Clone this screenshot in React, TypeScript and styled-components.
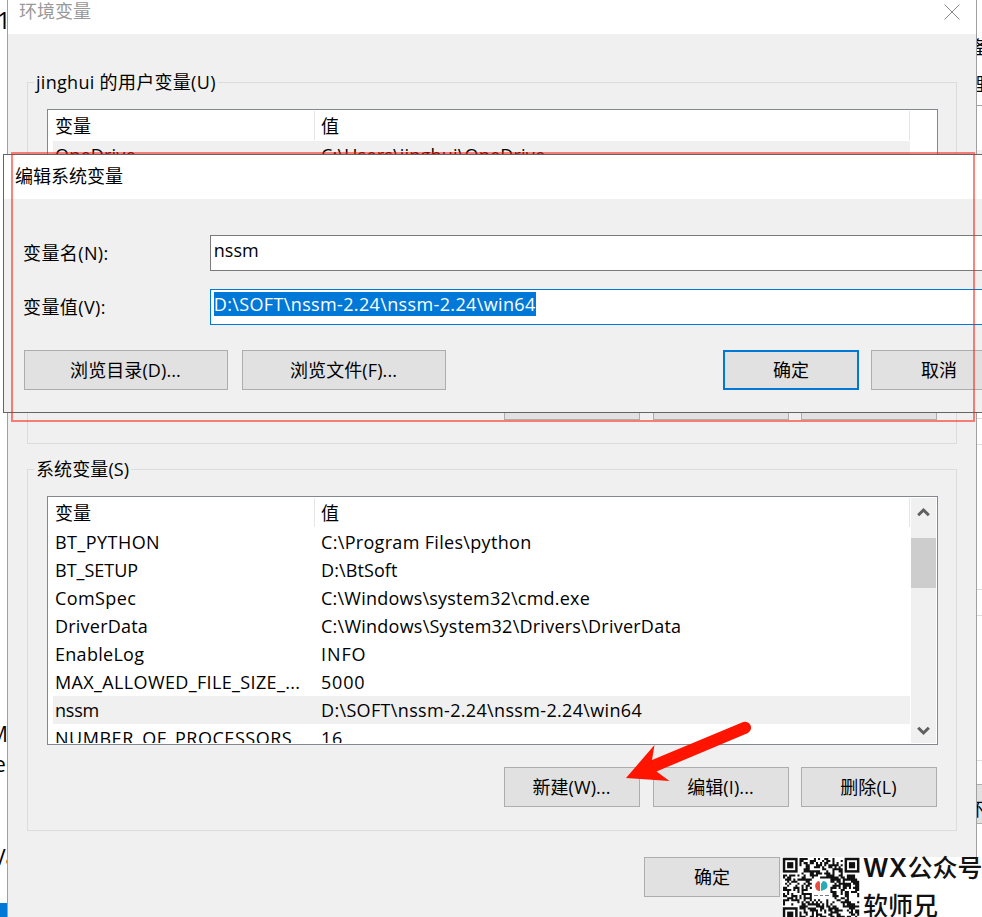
import React from 'react';
import styled, { createGlobalStyle, css } from 'styled-components';

const Global = createGlobalStyle`
  * { box-sizing: border-box; }
  html, body { margin: 0; padding: 0; background: #fff; overflow: hidden; }
`;

const Desktop = styled.main`
  position: relative;
  width: 982px;
  height: 917px;
  overflow: hidden;
  background: #fff;
  color: #000;
  font: 18px/28px 'Open Sans', 'Noto Sans CJK SC', sans-serif;
  white-space: nowrap;
`;

/* Parts of the window behind that stick out on either side */
const Backdrop = styled.div`
  display: flex;
  justify-content: space-between;
  height: 917px;
`;

const Strip = styled.div<{ $w: number }>`
  display: flex;
  flex-direction: column;
  width: ${p => p.$w}px;
  overflow: hidden;
`;

const Cell = styled.div<{ $h: number; $line?: string; $fill?: string }>`
  display: flex;
  flex: none;
  flex-direction: column;
  justify-content: flex-end;
  height: ${p => p.$h}px;
  border-bottom: ${p => (p.$line ? `1px solid ${p.$line}` : '0')};
  background: ${p => p.$fill ?? 'transparent'};
`;

const Scrap = styled.span<{ $shift: number; $size?: number }>`
  text-indent: ${p => p.$shift}px;
  font-size: ${p => p.$size ?? 21}px;
  line-height: 28px;
`;

const VariablesWindow = styled.section`
  position: absolute;
  left: 7px;
  top: -10px;
  display: flex;
  flex-direction: column;
  width: 970px;
  height: 960px;
  border: 1px solid #a0a0a0;
  background: #f0f0f0;
`;

const TitleBar = styled.header`
  display: flex;
  flex: none;
  justify-content: space-between;
  height: 43px;
  padding: 6px 16px 0 11px;
  background: #fff;
  color: #999;
`;

const CloseIcon = styled.svg`
  width: 16px;
  height: 16px;
  margin-top: 7px;
`;

const Groups = styled.div`
  display: flex;
  flex-direction: column;
  gap: 11px;
  padding: 34px 19px 26px;
`;

const Group = styled.fieldset`
  width: 930px;
  height: 376px;
  margin: 0;
  padding: 12px 18px 0 19px;
  border: 1px solid #dcdcdc;
`;

const GroupLabel = styled.legend<{ $track: number }>`
  height: 29px;
  margin-left: -13px;
  padding: 0 2px;
  letter-spacing: ${p => p.$track}px;
`;

const List = styled.div`
  display: flex;
  height: 249px;
  border: 1px solid #828790;
  background: #fff;
  overflow: hidden;
`;

const Table = styled.div`
  flex: none;
  width: 862px;
  height: 246px;
  overflow: hidden;
`;

const HeaderRow = styled.div`
  display: flex;
  height: 31px;
  padding: 1px 0;
`;

const HeaderCell = styled.div<{ $w: number; $inset: number }>`
  width: ${p => p.$w}px;
  padding-left: ${p => p.$inset}px;
  border-right: 1px solid #e5e5e5;
  line-height: 31px;
`;

const Row = styled.div<{ $selected?: boolean }>`
  display: flex;
  height: 28px;
  margin-left: 5px;
  padding-left: 2px;
  line-height: 28px;
  background: ${p => (p.$selected ? '#f0f0f0' : 'transparent')};
`;

const Name = styled.span<{ $track: number }>`
  width: 266px;
  letter-spacing: ${p => p.$track}px;
`;

const Value = styled.span<{ $track: number }>`
  letter-spacing: ${p => p.$track}px;
`;

const ScrollBar = styled.div`
  display: flex;
  flex-direction: column;
  align-items: center;
  width: 25px;
  height: 245px;
  margin: 1px;
  background: #f0f0f0;
`;

const Thumb = styled.div`
  width: 25px;
  height: 50px;
  margin-bottom: auto;
  background: #cdcdcd;
`;

const Chevron = styled.svg<{ $down?: boolean }>`
  width: 13px;
  height: 10px;
  margin: ${p => (p.$down ? '0 0 7px' : '9px 0 21px')};
  transform: ${p => (p.$down ? 'scaleY(-1)' : 'none')};
`;

const Actions = styled.div`
  display: flex;
  justify-content: flex-end;
  gap: 12px;
  padding: 22px 1px 0 0;
`;

const Button = styled.button<{ $w?: number; $primary?: boolean }>`
  flex: none;
  width: ${p => p.$w ?? 136}px;
  height: 40px;
  padding: 0;
  border: 1px solid #adadad;
  background: #e1e1e1;
  color: #000;
  font: inherit;
  ${p => p.$primary && css`border: 2px solid #0078d7;`}
`;

const ButtonText = styled.span`
  margin-left: -1px;
  letter-spacing: 0.1px;
`;

const FirstButton = styled(Button)`
  margin-right: 1px;
`;

const Footer = styled.footer`
  padding-left: 636px;
`;

const EditWindow = styled.section`
  position: absolute;
  left: 3px;
  top: 154px;
  width: 1025px;
  height: 259px;
  border: 1px solid #646464;
  background: #f0f0f0;
`;

const EditTitle = styled.header`
  height: 44px;
  padding: 7px 0 0 11px;
  background: #fff;
`;

const EditBody = styled.div`
  display: flex;
  flex-direction: column;
  gap: 18px;
  padding: 36px 20px 0 19px;
`;

const Field = styled.label`
  display: flex;
  height: 36px;
`;

const FieldName = styled.span`
  width: 187px;
  line-height: 36px;
  letter-spacing: 0.4px;
`;

const FieldBox = styled.div<{ $focus?: boolean }>`
  width: 798px;
  padding: 2px 3px;
  border: 1px solid ${p => (p.$focus ? '#0078d7' : '#7a7a7a')};
  background: #fff;
  line-height: 24px;
`;

const Selected = styled.span`
  display: inline-block;
  height: 24px;
  background: #0078d7;
  color: #fff;
  letter-spacing: 0.36px;
`;

const EditActions = styled.div`
  display: flex;
  justify-content: space-between;
  width: 984px;
  padding: 7px 0 0 1px;
`;

const ButtonPair = styled.div<{ $gap: number }>`
  display: flex;
  gap: ${p => p.$gap}px;
`;

const Highlight = styled.div`
  position: absolute;
  left: 11px;
  top: 152px;
  width: 964px;
  height: 270px;
  border: 2px solid rgba(255, 20, 10, 0.53);
`;

const Arrow = styled.svg`
  position: absolute;
  left: 620px;
  top: 715px;
  width: 140px;
  height: 72px;
`;

const Watermark = styled.aside`
  position: absolute;
  left: 782px;
  top: 857px;
  display: flex;
  width: 200px;
  height: 60px;
  background: #fff;
`;

const Code = styled.svg`
  flex: none;
  width: 78px;
  height: 60px;
`;

const Brand = styled.div`
  margin-top: -8px;
  padding-left: 3px;
  font-family: Inter, 'Noto Sans CJK SC', sans-serif;
  font-size: 25px;
  font-weight: 500;
  line-height: 38px;
  color: #111;
`;

const Latin = styled.span`
  font-weight: 600;
  letter-spacing: 0.5px;
`;

type Entry = { name: string; value: string; nameTrack: number; valueTrack: number; selected?: boolean };

const userEntries: Entry[] = [
  { name: 'OneDrive', value: 'C:\\Users\\jinghui\\OneDrive', nameTrack: 0.2, valueTrack: 0.2, selected: true },
];

const systemEntries: Entry[] = [
  { name: 'BT_PYTHON', value: 'C:\\Program Files\\python', nameTrack: 0.45, valueTrack: 0.32 },
  { name: 'BT_SETUP', value: 'D:\\BtSoft', nameTrack: 0, valueTrack: 0.1 },
  { name: 'ComSpec', value: 'C:\\Windows\\system32\\cmd.exe', nameTrack: 0.4, valueTrack: 0.22 },
  { name: 'DriverData', value: 'C:\\Windows\\System32\\Drivers\\DriverData', nameTrack: 0.22, valueTrack: 0.24 },
  { name: 'EnableLog', value: 'INFO', nameTrack: 0.28, valueTrack: 0.9 },
  { name: 'MAX_ALLOWED_FILE_SIZE_...', value: '5000', nameTrack: 0.36, valueTrack: 0.8 },
  { name: 'nssm', value: 'D:\\SOFT\\nssm-2.24\\nssm-2.24\\win64', nameTrack: -0.2, valueTrack: 0.34, selected: true },
  { name: 'NUMBER_OF_PROCESSORS', value: '16', nameTrack: 0.53, valueTrack: 0.8 },
];

const SIZE = 37;
const isReserved = (x: number, y: number) =>
  (x < 8 && y < 8) ||
  (x > SIZE - 9 && y < 8) ||
  (x < 8 && y > 22) ||
  (x > 13 && x < 23 && y > 9 && y < 20);

function modulesPath() {
  let seed = 71;
  let d = '';
  for (let y = 0; y < 30; y++) {
    for (let x = 0; x < SIZE; x++) {
      seed = (seed * 1103515245 + 12345) % 2147483648;
      if (!isReserved(x, y) && (seed >> 12) % 100 < 56) d += `M${x} ${y}h1v1h-1z`;
    }
  }
  return d;
}

function Finder({ x, y }: { x: number; y: number }) {
  return (
    <g>
      <rect x={x + 0.5} y={y + 0.5} width="6" height="6" fill="none" stroke="#111" strokeWidth="1.2" />
      <rect x={x + 2} y={y + 2} width="3" height="3" fill="#111" />
    </g>
  );
}

function ScrollArrow({ down }: { down?: boolean }) {
  return (
    <Chevron $down={down} viewBox="0 0 13 10">
      <path d="M1.2 8.300 6.500 3l5.300 5.300" fill="none" stroke="#606060" strokeWidth="3" />
    </Chevron>
  );
}

function VariableGroup({ label, track, entries, scroll }: { label: string; track: number; entries: Entry[]; scroll?: boolean }) {
  return (
    <Group>
      <GroupLabel $track={track}>{label}</GroupLabel>
      <List>
        <Table>
          <HeaderRow>
            <HeaderCell $w={267} $inset={7}>变量</HeaderCell>
            <HeaderCell $w={595} $inset={6}>值</HeaderCell>
          </HeaderRow>
          {entries.map(e => (
            <Row key={e.name} $selected={e.selected}>
              <Name $track={e.nameTrack}>{e.name}</Name>
              <Value $track={e.valueTrack}>{e.value}</Value>
            </Row>
          ))}
        </Table>
        {scroll && (
          <ScrollBar>
            <ScrollArrow />
            <Thumb />
            <ScrollArrow down />
          </ScrollBar>
        )}
      </List>
      <Actions>
        <FirstButton><ButtonText>新建(W)...</ButtonText></FirstButton>
        <Button><ButtonText>编辑(I)...</ButtonText></Button>
        <Button><ButtonText>删除(L)</ButtonText></Button>
      </Actions>
    </Group>
  );
}

export default function App() {
  return (
    <Desktop>
      <Global />
      <Backdrop>
        <Strip $w={8}>
          <Cell $h={34}><Scrap $shift={-3} $size={24}>1</Scrap></Cell>
          <Cell $h={714}><Scrap $shift={-11}>M</Scrap></Cell>
          <Cell $h={30}><Scrap $shift={-6}>e</Scrap></Cell>
          <Cell $h={93}><Scrap $shift={-7}>Va</Scrap></Cell>
          <Cell $h={32} />
          <Cell $h={14} $fill="#0078d7" />
        </Strip>
        <Strip $w={6}>
          <Cell $h={61}><Scrap $shift={-5} $size={18}>备</Scrap></Cell>
          <Cell $h={37}><Scrap $shift={-6} $size={18}>理</Scrap></Cell>
          <Cell $h={8} $line="#a0a0a0" />
          <Cell $h={44} />
          <Cell $h={4} $fill="#f0f0f0" />
          <Cell $h={265} $line="#dcdcdc" />
          <Cell $h={26} $line="#dcdcdc" />
          <Cell $h={145} $line="#dcdcdc" />
          <Cell $h={26} $line="#dcdcdc" />
          <Cell $h={145} $line="#dcdcdc" />
          <Cell $h={24} $line="#adadad" />
          <Cell $h={39} $line="#adadad" $fill="#e1e1e1"><Scrap $shift={-10} $size={18}>环</Scrap></Cell>
        </Strip>
      </Backdrop>

      <VariablesWindow>
        <TitleBar>
          环境变量
          <CloseIcon viewBox="0 0 16 16"><path d="M.5.5l15 15M15.500.5l-15 15" stroke="#888" fill="none" /></CloseIcon>
        </TitleBar>
        <Groups>
          <VariableGroup label="jinghui 的用户变量(U)" track={0.3} entries={userEntries} />
          <VariableGroup label="系统变量(S)" track={0.1} entries={systemEntries} scroll />
        </Groups>
        <Footer><Button>确定</Button></Footer>
      </VariablesWindow>

      <EditWindow>
        <EditTitle>编辑系统变量</EditTitle>
        <EditBody>
          <Field><FieldName>变量名(N):</FieldName><FieldBox>nssm</FieldBox></Field>
          <Field>
            <FieldName>变量值(V):</FieldName>
            <FieldBox $focus><Selected>D:\SOFT\nssm-2.24\nssm-2.24\win64</Selected></FieldBox>
          </Field>
          <EditActions>
            <ButtonPair $gap={14}>
              <Button $w={204}><ButtonText>浏览目录(D)...</ButtonText></Button>
              <Button $w={204}><ButtonText>浏览文件(F)...</ButtonText></Button>
            </ButtonPair>
            <ButtonPair $gap={12}>
              <Button $primary>确定</Button>
              <Button>取消</Button>
            </ButtonPair>
          </EditActions>
        </EditBody>
      </EditWindow>

      <Highlight />
      <Arrow viewBox="620 715 140 72">
        <path d="M626 778 654.500 745 652 760 742 722.500A6 6 0 0 1 748 733L656.500 771.500 669.500 781Z" fill="#ff1400" />
      </Arrow>

      <Watermark>
        <Code viewBox="0 0 78 60">
          <g transform="translate(1 1) scale(2.06)">
            <path d={modulesPath()} fill="#111" />
            <Finder x={0} y={0} />
            <Finder x={30} y={0} />
            <Finder x={0} y={24} />
          </g>
          <path d="M36 24a2 2 0 0 1 2 2v8a4.500 5 0 0 1-3-9z" fill="#e84c3d" />
          <path d="M41 24a4.500 4.500 0 0 1 2 8.500l-4 1.500v-7z" fill="#29abb8" />
          <path d="M32 38.500h4m2 0h3m2 0h4" stroke="#777" />
        </Code>
        <Brand><Latin>WX</Latin>公众号<br />软师兄</Brand>
      </Watermark>
    </Desktop>
  );
}
